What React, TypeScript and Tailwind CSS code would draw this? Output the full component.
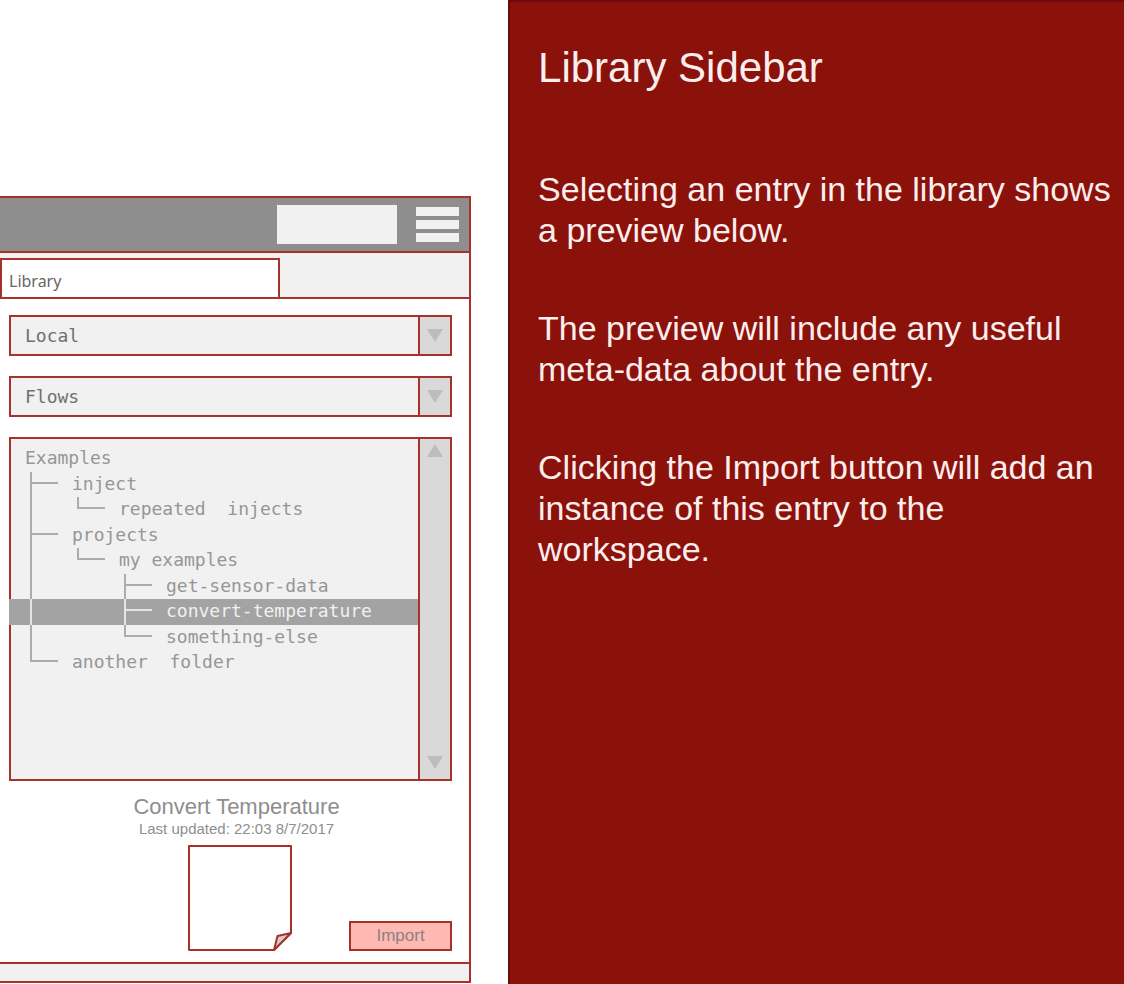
import React from "react";

type Guide = "tee" | "elbow" | "pipe" | "blank";

type Entry = { label: string; guides: Guide[]; selected?: boolean };

const entries: Entry[] = [
  { label: "Examples", guides: [] },
  { label: "inject", guides: ["tee"] },
  { label: "repeated  injects", guides: ["pipe", "elbow"] },
  { label: "projects", guides: ["tee"] },
  { label: "my examples", guides: ["pipe", "elbow"] },
  { label: "get-sensor-data", guides: ["pipe", "blank", "tee"] },
  { label: "convert-temperature", guides: ["pipe", "blank", "tee"], selected: true },
  { label: "something-else", guides: ["pipe", "blank", "elbow"] },
  { label: "another  folder", guides: ["elbow"] },
];

const topHalf: Record<Guide, string> = {
  tee: "border-l-2 border-b-2",
  elbow: "border-l-2 border-b-2",
  pipe: "border-l-2",
  blank: "",
};

const bottomHalf: Record<Guide, string> = {
  tee: "border-l-2",
  elbow: "",
  pipe: "border-l-2",
  blank: "",
};

function Triangle({ up = false }: { up?: boolean }) {
  return (
    <svg width="18" height="13" viewBox="0 0 18 13" aria-hidden="true">
      <path d={up ? "M9 0 L17 13 H1 Z" : "M1 0 H17 L9 13 Z"} fill="#bdbdbd" />
    </svg>
  );
}

function Dropdown({ label, options }: { label: string; options: string[] }) {
  return (
    <div className="flex h-[41px] border-2 border-[#a8322b] bg-[#f1f1f1]">
      <select
        aria-label={label}
        className="min-w-0 flex-1 appearance-none bg-transparent px-[14px] font-['DejaVu_Sans_Mono',monospace] text-[18px] text-[#707070] outline-none"
      >
        {options.map((option) => (
          <option key={option}>{option}</option>
        ))}
      </select>
      <span className="flex w-8 items-center justify-center border-l-2 border-[#a8322b] bg-[#d9d9d9]">
        <Triangle />
      </span>
    </div>
  );
}

function Tree() {
  return (
    <div className="flex h-[344px] border-2 border-[#a8322b] bg-[#f1f1f1]">
      <ul
        role="tree"
        aria-label="Library entries"
        className="-ml-[2px] mt-[7px] grid h-[230px] min-w-0 flex-1 grid-rows-9 font-['DejaVu_Sans_Mono',monospace] text-[18px] leading-[23px]"
      >
        {entries.map((entry) => (
          <li
            key={entry.label}
            role="treeitem"
            aria-selected={!!entry.selected}
            className={
              entry.selected
                ? "flex min-h-0 bg-[#a3a3a3] pl-4 text-[#f0f0f0]"
                : "flex min-h-0 pl-4 text-[#969696]"
            }
          >
            {entry.guides.map((guide, i) => (
              <span
                key={i}
                aria-hidden="true"
                className={
                  entry.selected
                    ? "flex w-[47px] flex-col border-[#e4e4e4] pl-[5px]"
                    : "flex w-[47px] flex-col border-[#acacac] pl-[5px]"
                }
              >
                <span className={`h-3 w-7 border-inherit ${topHalf[guide]}`} />
                <span className={`w-7 flex-1 border-inherit ${bottomHalf[guide]}`} />
              </span>
            ))}
            <span className="whitespace-pre">{entry.label}</span>
          </li>
        ))}
      </ul>
      <div className="flex w-8 flex-col items-center justify-between border-l-2 border-[#a8322b] bg-[#d9d9d9] pb-[10px] pt-[5px]">
        <button type="button" aria-label="Scroll up">
          <Triangle up />
        </button>
        <button type="button" aria-label="Scroll down">
          <Triangle />
        </button>
      </div>
    </div>
  );
}

function Sidebar() {
  return (
    <section className="border-r-2 border-[#a8322b] font-['Liberation_Sans',sans-serif]">
      <header className="flex h-[57px] items-center justify-end gap-[19px] border-y-2 border-[#a8322b] bg-[#8e8e8e] pr-[10px]">
        <input aria-label="Search" className="h-[39px] w-[120px] bg-[#f1f1f1] px-2 outline-none" />
        <button type="button" aria-label="Menu" className="flex w-[43px] flex-col gap-1">
          <span className="h-[9px] bg-[#f1f1f1]" />
          <span className="h-[9px] bg-[#f1f1f1]" />
          <span className="h-[9px] bg-[#f1f1f1]" />
        </button>
      </header>
      <div role="tablist" className="flex h-[46px] border-b-2 border-[#a8322b] bg-[#f1f1f1] pt-[5px]">
        <button
          type="button"
          role="tab"
          aria-selected="true"
          className="w-[280px] border-x-2 border-t-2 border-[#a8322b] bg-white px-[7px] pt-1 text-left font-['Noto_Sans',sans-serif] text-[16px] text-[#666666]"
        >
          Library
        </button>
      </div>
      <div className="pb-[11px] pl-[9px] pr-[17px] pt-4">
        <div className="flex flex-col gap-5">
          <Dropdown label="Source" options={["Local"]} />
          <Dropdown label="Type" options={["Flows"]} />
          <Tree />
        </div>
        <div className="-mr-3 mt-3 text-center text-[#8e8e8e]">
          <h2 className="text-[22px] leading-[27px]">Convert Temperature</h2>
          <p className="text-[15px] leading-[18px]">Last updated: 22:03 8/7/2017</p>
        </div>
        <div className="mt-[6px] flex items-end justify-between pl-[178px]">
          <svg width="106" height="107" viewBox="0 0 106 107" aria-hidden="true">
            <g stroke="#a8322b" strokeWidth="2" strokeLinejoin="round">
              <path d="M2 2 H104 V89 L87 106 H2 Z" fill="#ffffff" />
              <path d="M104 89 L90.500 92 L87 106 Z" fill="#cdcdcd" />
            </g>
          </svg>
          <button
            type="button"
            className="h-[30px] w-[103px] border-2 border-[#a8322b] bg-[#ffb9b3] text-[17px] leading-[26px] text-[#8e8080]"
          >
            Import
          </button>
        </div>
      </div>
      <footer className="h-[21px] border-y-2 border-[#a8322b] bg-[#f1f1f1]" />
    </section>
  );
}

export default function App() {
  return (
    <main className="flex min-h-screen bg-white">
      <div className="w-[45.2%] pr-[37px] pt-[196px]">
        <Sidebar />
      </div>
      <article className="flex-1 border-l-2 border-t-2 border-[#6c0a09] bg-[#8b110b] pl-7 pr-2 pt-[42px] font-['Liberation_Sans',sans-serif] text-[#fbeeed]">
        <h1 className="text-[42px] leading-[48px]">Library Sidebar</h1>
        <div className="mt-[77px] flex flex-col gap-[57px] text-[34px] leading-[41px]">
          <p>Selecting an entry in the library shows a preview below.</p>
          <p>The preview will include any useful meta-data about the entry.</p>
          <p>Clicking the Import button will add an instance of this entry to the workspace.</p>
        </div>
      </article>
    </main>
  );
}
